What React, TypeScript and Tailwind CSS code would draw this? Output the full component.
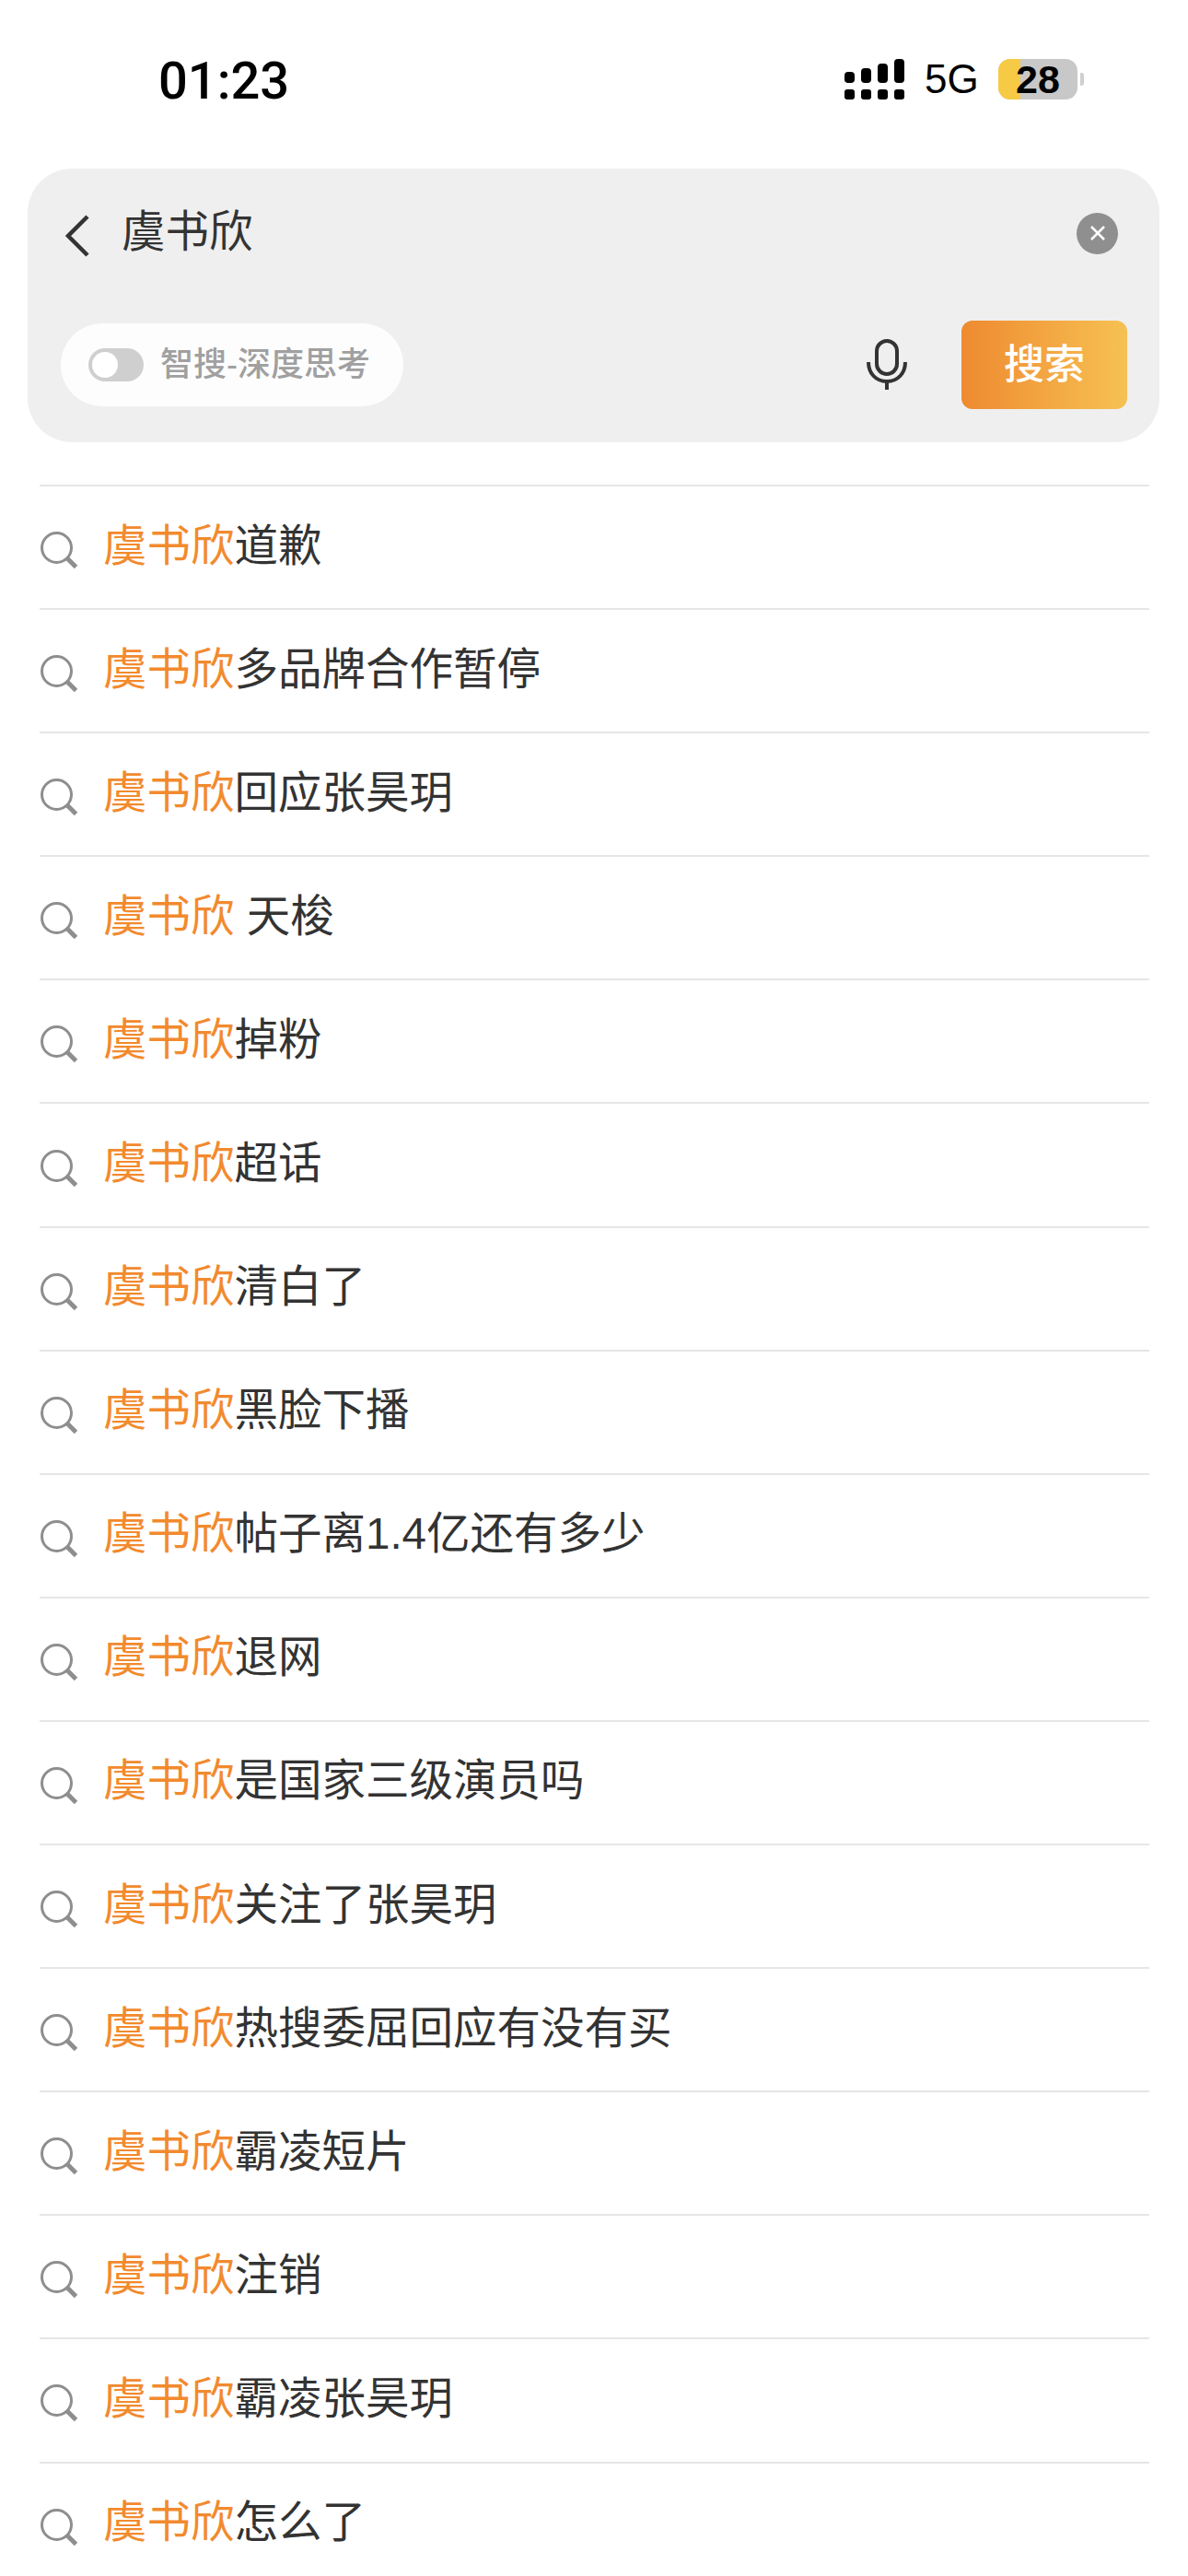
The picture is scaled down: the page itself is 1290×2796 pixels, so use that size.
const rows = ["道歉","多品牌合作暂停","回应张昊玥"," 天梭","掉粉","超话","清白了","黑脸下播","帖子离1.4亿还有多少","退网","是国家三级演员吗","关注了张昊玥","热搜委屈回应有没有买","霸凌短片","注销","霸凌张昊玥","怎么了"];

const font = "font-['Liberation_Sans','Noto_Sans_CJK_SC',sans-serif]";

function Signal() {
  const tops = [12, 16, 21, 26];
  return (
    <div className="flex gap-[7px] items-end w-[66px]">
      {tops.map((h, i) => (
        <div key={i} className="flex flex-col items-center gap-[7px] w-[11px]">
          <div className="w-[11px] bg-black rounded-[4px]" style={{ height: h }} />
          <div className="w-[11px] h-[11px] bg-black rounded-[3px]" />
        </div>
      ))}
    </div>
  );
}

function SearchIcon() {
  return (
    <svg width="42" height="42" viewBox="0 0 42 42" fill="none" className="shrink-0 mt-[6px]">
      <circle cx="18.5" cy="18.5" r="16" stroke="#8e8e8e" strokeWidth="3" />
      <path d="M29.5 29.5 L39.5 39.5" stroke="#8e8e8e" strokeWidth="5" />
    </svg>
  );
}

export default function App() {
  return (
    <div className={`w-[1290px] h-[2796px] bg-white overflow-hidden ${font}`}>
      <div className="h-[183px] flex items-start pt-[64px] pl-[172px] pr-[113px] justify-between">
        <div className="font-['Roboto',sans-serif] font-medium text-[56px] leading-[48px] text-black">01:23</div>
        <div className="flex items-center h-[44px]">
          <Signal />
          <div className="font-['Liberation_Sans',sans-serif] text-[44px] leading-[44px] text-black ml-[21px] w-[59px]">5G</div>
          <div className="relative ml-[21px] w-[86px] h-[44px] rounded-[13px] overflow-hidden bg-[#c8c8c8] flex items-center justify-center font-['Liberation_Sans',sans-serif] font-bold text-[43px] leading-[44px] text-black">
            <div className="absolute left-0 top-0 bottom-0 w-[24px] bg-[#f7ca45]" />
            <span className="relative">28</span>
          </div>
          <div className="ml-[3px] w-[4px] h-[14px] rounded-r-[3px] bg-[#cfcfcf]" />
        </div>
      </div>

      <div className="ml-[30px] w-[1229px] h-[297px] rounded-[48px] bg-[#efefef] flex flex-col">
        <div className="h-[165px] flex items-center pl-[40px] pr-[45px] pb-[25px]">
          <svg width="28" height="46" viewBox="0 0 28 46" fill="none" className="shrink-0 mt-[5px]">
            <path d="M25 2 L4 23 L25 44" stroke="#333333" strokeWidth="4.5" />
          </svg>
          <div className="ml-[34px] mb-[3px] text-[47.5px] leading-[60px] text-[#333333]">虞书欣</div>
          <div className="ml-auto w-[45px] h-[45px] rounded-full bg-[#8f8f8f] flex items-center justify-center">
            <svg width="20" height="20" viewBox="0 0 20 20" fill="none">
              <path d="M3 3 L17 17 M17 3 L3 17" stroke="#ffffff" strokeWidth="2.6" />
            </svg>
          </div>
        </div>
        <div className="flex items-center pl-[36px] pr-[35px]">
          <div className="w-[372px] h-[90px] rounded-[45px] bg-[#fdfdfd] flex items-center pl-[30px]">
            <div className="w-[60px] h-[36px] rounded-full bg-[#cfcfcf] flex items-center pl-[4px]">
              <div className="w-[28px] h-[28px] rounded-full bg-white" />
            </div>
            <div className="ml-[18px] text-[36px] leading-[40px] font-medium text-[#a0a0a0] whitespace-nowrap">智搜-深度思考</div>
          </div>
          <svg width="46" height="56" viewBox="0 0 46 56" fill="none" className="ml-[502px] shrink-0">
            <rect x="12" y="2" width="22" height="36" rx="11" stroke="#333333" strokeWidth="4" />
            <path d="M3 25 C3 37 11 46 23 46 C35 46 43 37 43 25" stroke="#333333" strokeWidth="4" />
            <path d="M23 46 V55" stroke="#333333" strokeWidth="4" />
          </svg>
          <div className="ml-auto w-[180px] h-[96px] rounded-[12px] bg-gradient-to-r from-[#ee8a30] to-[#f6c152] flex items-center justify-center text-[44px] font-medium text-white">搜索</div>
        </div>
      </div>

      <div className="mt-[46px] ml-[43px] w-[1205px]">
        {rows.map((t, i) => (
          <div key={i} className="h-[134.1px] border-t-2 border-[#e6e6e6] flex items-center">
            <SearchIcon />
            <div className="ml-[27px] mb-[3px] text-[47.5px] leading-[60px] text-[#333333] whitespace-pre">
              <span className="text-[#f28a2e]">虞书欣</span>{t}
            </div>
          </div>
        ))}
      </div>
    </div>
  );
}
